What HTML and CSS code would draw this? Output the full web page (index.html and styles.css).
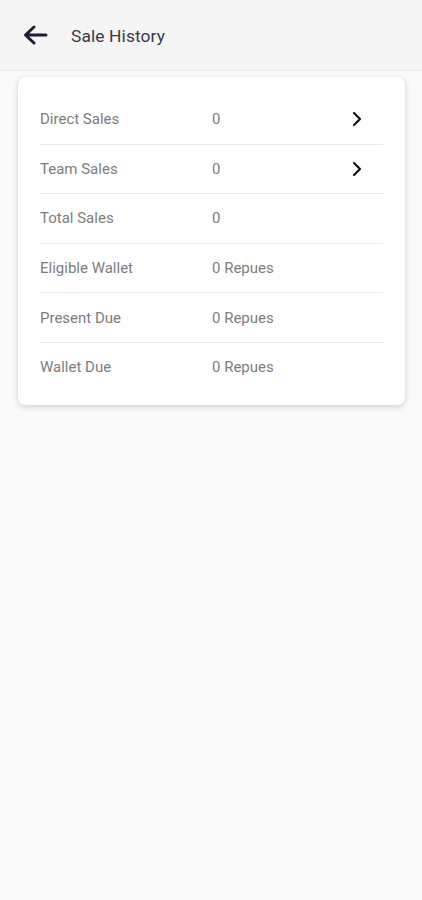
FILE: index.html
```html
<!DOCTYPE html>
<html>
<head>
<meta charset="utf-8">
<link rel="stylesheet" href="styles.css">
</head>
<body>
<header class="appbar">
  <svg class="back" width="26" height="22" viewBox="0 0 26 22" aria-hidden="true">
    <path d="M24 11H4M12 3L3.5 11L12 19" fill="none" stroke="#1b1b3a" stroke-width="3" stroke-linecap="round" stroke-linejoin="round"/>
  </svg>
  <h1 class="title">Sale History</h1>
</header>
<main class="content">
  <section class="card">
    <div class="row"><span class="label">Direct Sales</span><span class="value">0</span>
      <svg class="chev" width="12" height="18" viewBox="0 0 12 18"><path d="M3 3L9 9L3 15" fill="none" stroke="#111" stroke-width="2.2" stroke-linecap="round" stroke-linejoin="round"/></svg></div>
    <div class="row"><span class="label">Team Sales</span><span class="value">0</span>
      <svg class="chev" width="12" height="18" viewBox="0 0 12 18"><path d="M3 3L9 9L3 15" fill="none" stroke="#111" stroke-width="2.2" stroke-linecap="round" stroke-linejoin="round"/></svg></div>
    <div class="row"><span class="label">Total Sales</span><span class="value">0</span></div>
    <div class="row"><span class="label">Eligible Wallet</span><span class="value">0 Repues</span></div>
    <div class="row"><span class="label">Present Due</span><span class="value">0 Repues</span></div>
    <div class="row"><span class="label">Wallet Due</span><span class="value">0 Repues</span></div>
  </section>
</main>
</body>
</html>
```
FILE: styles.css
```css
html, body {
  margin: 0;
  padding: 0;
}
body {
  background: #fafafa;
  font-family: Roboto, "Noto Sans", Arial, sans-serif;
  width: 422px;
  height: 900px;
}
.appbar {
  height: 71px;
  box-sizing: border-box;
  background: #f5f5f5;
  border-bottom: 1px solid #e6e6e6;
  display: flex;
  align-items: center;
  padding-left: 22px;
  padding-top: 2px;
}
.back {
  display: block;
  margin-right: 23px;
  margin-top: -2px;
}
.title {
  margin: 0;
  font-size: 17.4px;
  font-weight: 400;
  color: #3a3a48;
  letter-spacing: 0.1px;
}
.content {
  padding: 6px 17px 0 18px;
}
.card {
  background: #fff;
  border-radius: 7px;
  box-shadow: 0 2px 6px rgba(0,0,0,0.16), 0 0 2px rgba(0,0,0,0.06);
  padding: 18px 22px 13px 22px;
}
.row {
  height: 48.6px;
  display: flex;
  align-items: center;
  border-bottom: 1px solid #ebebeb;
  font-size: 15px;
  color: #7d7d7d;
  position: relative;
}
.row:last-child {
  border-bottom: none;
}
.label {
  width: 172px;
}
.value {
  flex: 1;
}
.chev {
  display: block;
  margin-right: 20px;
}
```
